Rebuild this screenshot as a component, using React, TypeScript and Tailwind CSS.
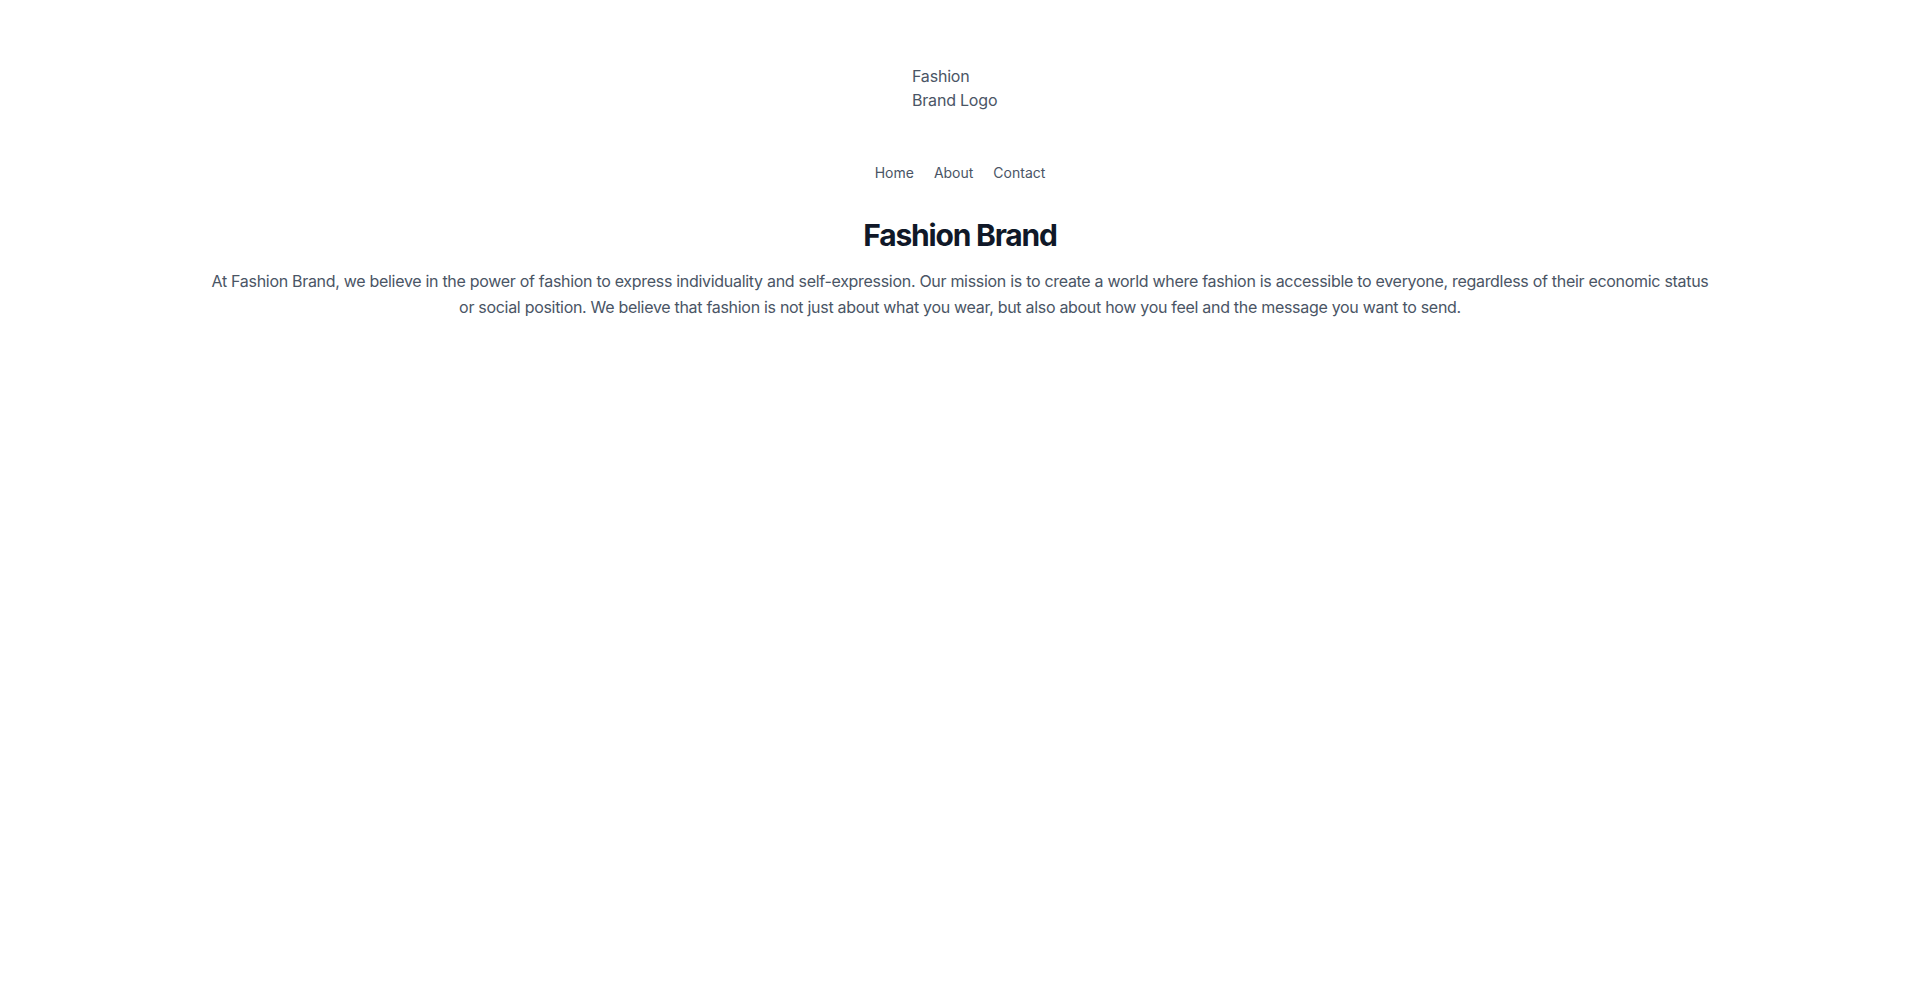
import React from 'react';

export default function App() {
  const links = ['Home', 'About', 'Contact'];

  return (
    <div className="min-h-screen bg-white font-['Inter','Liberation_Sans',sans-serif]">
      <header className="flex flex-col items-center pt-16">
        <div className="w-24 text-base leading-6 tracking-[-0.2px] text-gray-600">Fashion Brand Logo</div>
        <nav className="mt-[51px]">
          <ul className="flex space-x-5 text-sm text-gray-600">
            {links.map((link) => (
              <li key={link}>
                <a href="#" className="hover:text-gray-900">
                  {link}
                </a>
              </li>
            ))}
          </ul>
        </nav>
      </header>

      <main className="mx-auto mt-[34px] px-4 text-center">
        <h1 className="text-3xl font-bold tracking-[-0.04em] text-gray-900">Fashion Brand</h1>
        <p className="mx-auto mt-[15px] max-w-[1512px] text-base leading-relaxed tracking-[-0.3px] text-gray-600">
          At Fashion Brand, we believe in the power of fashion to express individuality and self-expression. Our mission is to
          create a world where fashion is accessible to everyone, regardless of their economic status or social position. We
          believe that fashion is not just about what you wear, but also about how you feel and the message you want to send.
        </p>
      </main>
    </div>
  );
}
